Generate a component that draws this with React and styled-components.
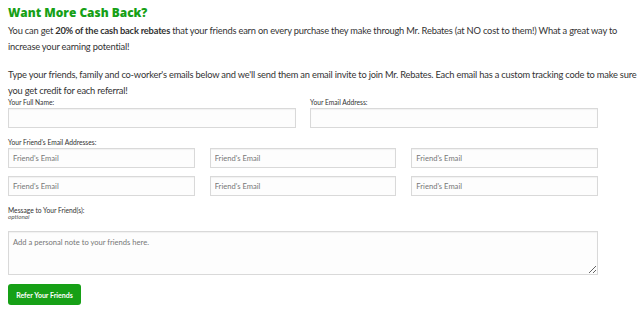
import styled, { createGlobalStyle } from "styled-components";

const GlobalStyle = createGlobalStyle`
  body {
    margin: 0;
    background: #fff;
    font-family: Lato, "Open Sans", sans-serif;
    color: #333;
  }
`;

const Page = styled.div`
  width: 590px;
  padding: 3px 8px 0;
`;

const Title = styled.h2`
  margin: 0 0 2px;
  font-family: "Open Sans", sans-serif;
  font-size: 11.9px;
  font-weight: 800;
  color: #16a016;
  line-height: 18px;
`;

const Text = styled.p`
  margin: 0;
  font-size: 9.3px;
  letter-spacing: -0.2px;
  line-height: 16px;
  color: #333;
  white-space: nowrap;
  & + & {
    margin-top: 12px;
  }
`;

const Form = styled.form`
  display: flex;
  flex-direction: column;
`;

const Row = styled.div`
  display: grid;
  grid-template-columns: repeat(${(p) => p.cols}, 1fr);
  column-gap: ${(p) => p.gap}px;
  row-gap: 8px;
  margin-bottom: ${(p) => p.mb || 0}px;
`;

const Field = styled.div`
  display: flex;
  flex-direction: column;
`;

const Label = styled.label`
  font-size: 6.7px;
  line-height: 6px;
  color: #333;
  white-space: nowrap;
  margin-bottom: ${(p) => p.mb ?? 3}px;
`;

const Hint = styled.span`
  font-size: 6.3px;
  line-height: 6px;
  font-style: italic;
  color: #555;
  margin: 1px 0 11px;
`;

const Input = styled.input`
  box-sizing: border-box;
  height: 20px;
  width: 100%;
  border: 1px solid #d9d9d9;
  box-shadow: inset 0 1px 1px rgba(0, 0, 0, 0.05);
  background: #fdfdfd;
  padding: 0 4px;
  font-family: Lato, sans-serif;
  font-size: 7.6px;
  color: #333;
  outline: none;
  &::placeholder {
    color: #777;
  }
`;

const Note = styled.textarea`
  box-sizing: border-box;
  display: block;
  width: 100%;
  height: 44px;
  border: 1px solid #d9d9d9;
  box-shadow: inset 0 1px 1px rgba(0, 0, 0, 0.05);
  background: #fdfdfd;
  padding: 5px 4px;
  font-family: Lato, sans-serif;
  font-size: 7.6px;
  color: #333;
  resize: vertical;
  outline: none;
  margin: 0 0 9px;
  &::placeholder {
    color: #777;
  }
`;

const Button = styled.button`
  align-self: flex-start;
  height: 21px;
  width: 73px;
  border: none;
  border-radius: 3px;
  background: #16a016;
  color: #fff;
  font-family: Lato, sans-serif;
  font-weight: 700;
  font-size: 7px;
  padding: 0;
`;

const App = () => {
  return (
    <Page>
      <GlobalStyle />
      <Title>Want More Cash Back?</Title>
      <Text>
        You can get <b>20% of the cash back rebates</b> that your friends earn on every
        purchase they make through Mr. Rebates (at NO cost to them!) What a great way to
        <br />
        increase your earning potential!
      </Text>
      <Text>
        Type your friends, family and co-worker's emails below and we'll send them an email
        invite to join Mr. Rebates. Each email has a custom tracking code to make sure
        <br />
        you get credit for each referral!
      </Text>
      <Form>
        <Row cols={2} gap={14} mb={11}>
          <Field>
            <Label>Your Full Name:</Label>
            <Input type="text" />
          </Field>
          <Field>
            <Label>Your Email Address:</Label>
            <Input type="email" />
          </Field>
        </Row>
        <Label>Your Friend's Email Addresses:</Label>
        <Row cols={3} gap={15} mb={11}>
          {Array.from({ length: 6 }).map((_, i) => (
            <Input key={i} type="email" placeholder="Friend's Email" />
          ))}
        </Row>
        <Label mb={0}>Message to Your Friend(s):</Label>
        <Hint>optional</Hint>
        <Note placeholder="Add a personal note to your friends here." />
        <Button type="button">Refer Your Friends</Button>
      </Form>
    </Page>
  );
};

export default App;
